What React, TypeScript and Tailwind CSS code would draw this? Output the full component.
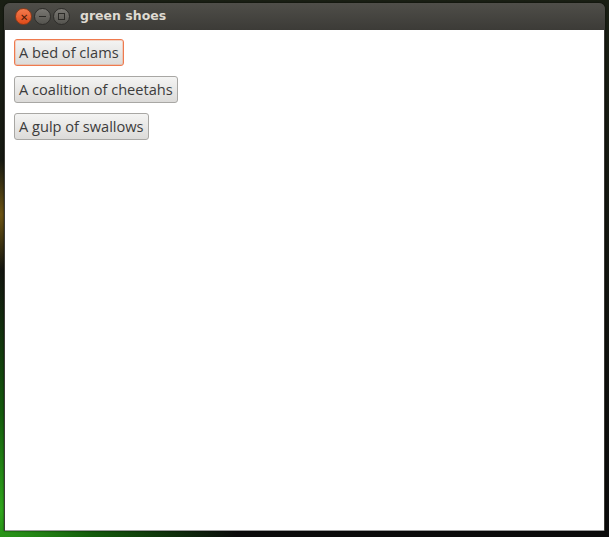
export default function App() {
  const buttons = ["A bed of clams", "A coalition of cheetahs", "A gulp of swallows"];

  return (
    <div className="h-[537px] w-[609px] overflow-hidden bg-[radial-gradient(circle_at_0%_95%,#2fa51c_0,#145c0c_12%,transparent_30%),radial-gradient(circle_at_0%_40%,#6b5312_0,transparent_8%),linear-gradient(#1a1f14,#0b0b0b)] pl-[4px] pt-[3px]">
      <div className="flex h-[528px] w-[601px] flex-col rounded-t-[6px] bg-[#3c3b37] shadow-[0_0_2px_rgba(0,0,0,0.8)]">
        {/* title bar */}
        <div className="flex h-[27px] items-center rounded-t-[6px] bg-gradient-to-b from-[#4f4e49] to-[#3c3b37] pl-[11px]">
          <div className="flex items-center gap-[2px]">
            <span className="flex h-[17px] w-[17px] items-center justify-center rounded-full border border-[#8a3a1a] bg-gradient-to-b from-[#f37a4c] to-[#df4a16] text-[10px] leading-none text-[#4a1a08]">
              ✕
            </span>
            <span className="flex h-[17px] w-[17px] items-center justify-center rounded-full border border-[#2e2d2a] bg-gradient-to-b from-[#7a7873] to-[#55544f]">
              <span className="h-[1.5px] w-[7px] bg-[#2b2a27]" />
            </span>
            <span className="flex h-[17px] w-[17px] items-center justify-center rounded-full border border-[#2e2d2a] bg-gradient-to-b from-[#7a7873] to-[#55544f]">
              <span className="h-[7px] w-[7px] border border-[#2b2a27]" />
            </span>
          </div>
          <span className="ml-[10px] font-['DejaVu_Sans',sans-serif] text-[12.5px] font-bold text-[#dfdbd2]">
            green shoes
          </span>
        </div>
        {/* content */}
        <div className="mx-[1px] flex flex-1 flex-col items-start gap-[10px] border-b border-[#9a9a9a] bg-white px-[9px] pt-[9px]">
          {buttons.map((label, i) => (
            <button
              key={label}
              className={`h-[27px] rounded-[3px] border bg-gradient-to-b from-[#f4f4f3] to-[#dcdbd9] px-[4px] font-['Open_Sans',sans-serif] text-[14.6px] leading-none text-[#3c3c3c] ${
                i === 0 ? "border-[#ef7a4e] shadow-[inset_0_0_0_1px_rgba(240,150,110,0.35)]" : "border-[#a8a7a4]"
              }`}
            >
              {label}
            </button>
          ))}
        </div>
      </div>
    </div>
  );
}
